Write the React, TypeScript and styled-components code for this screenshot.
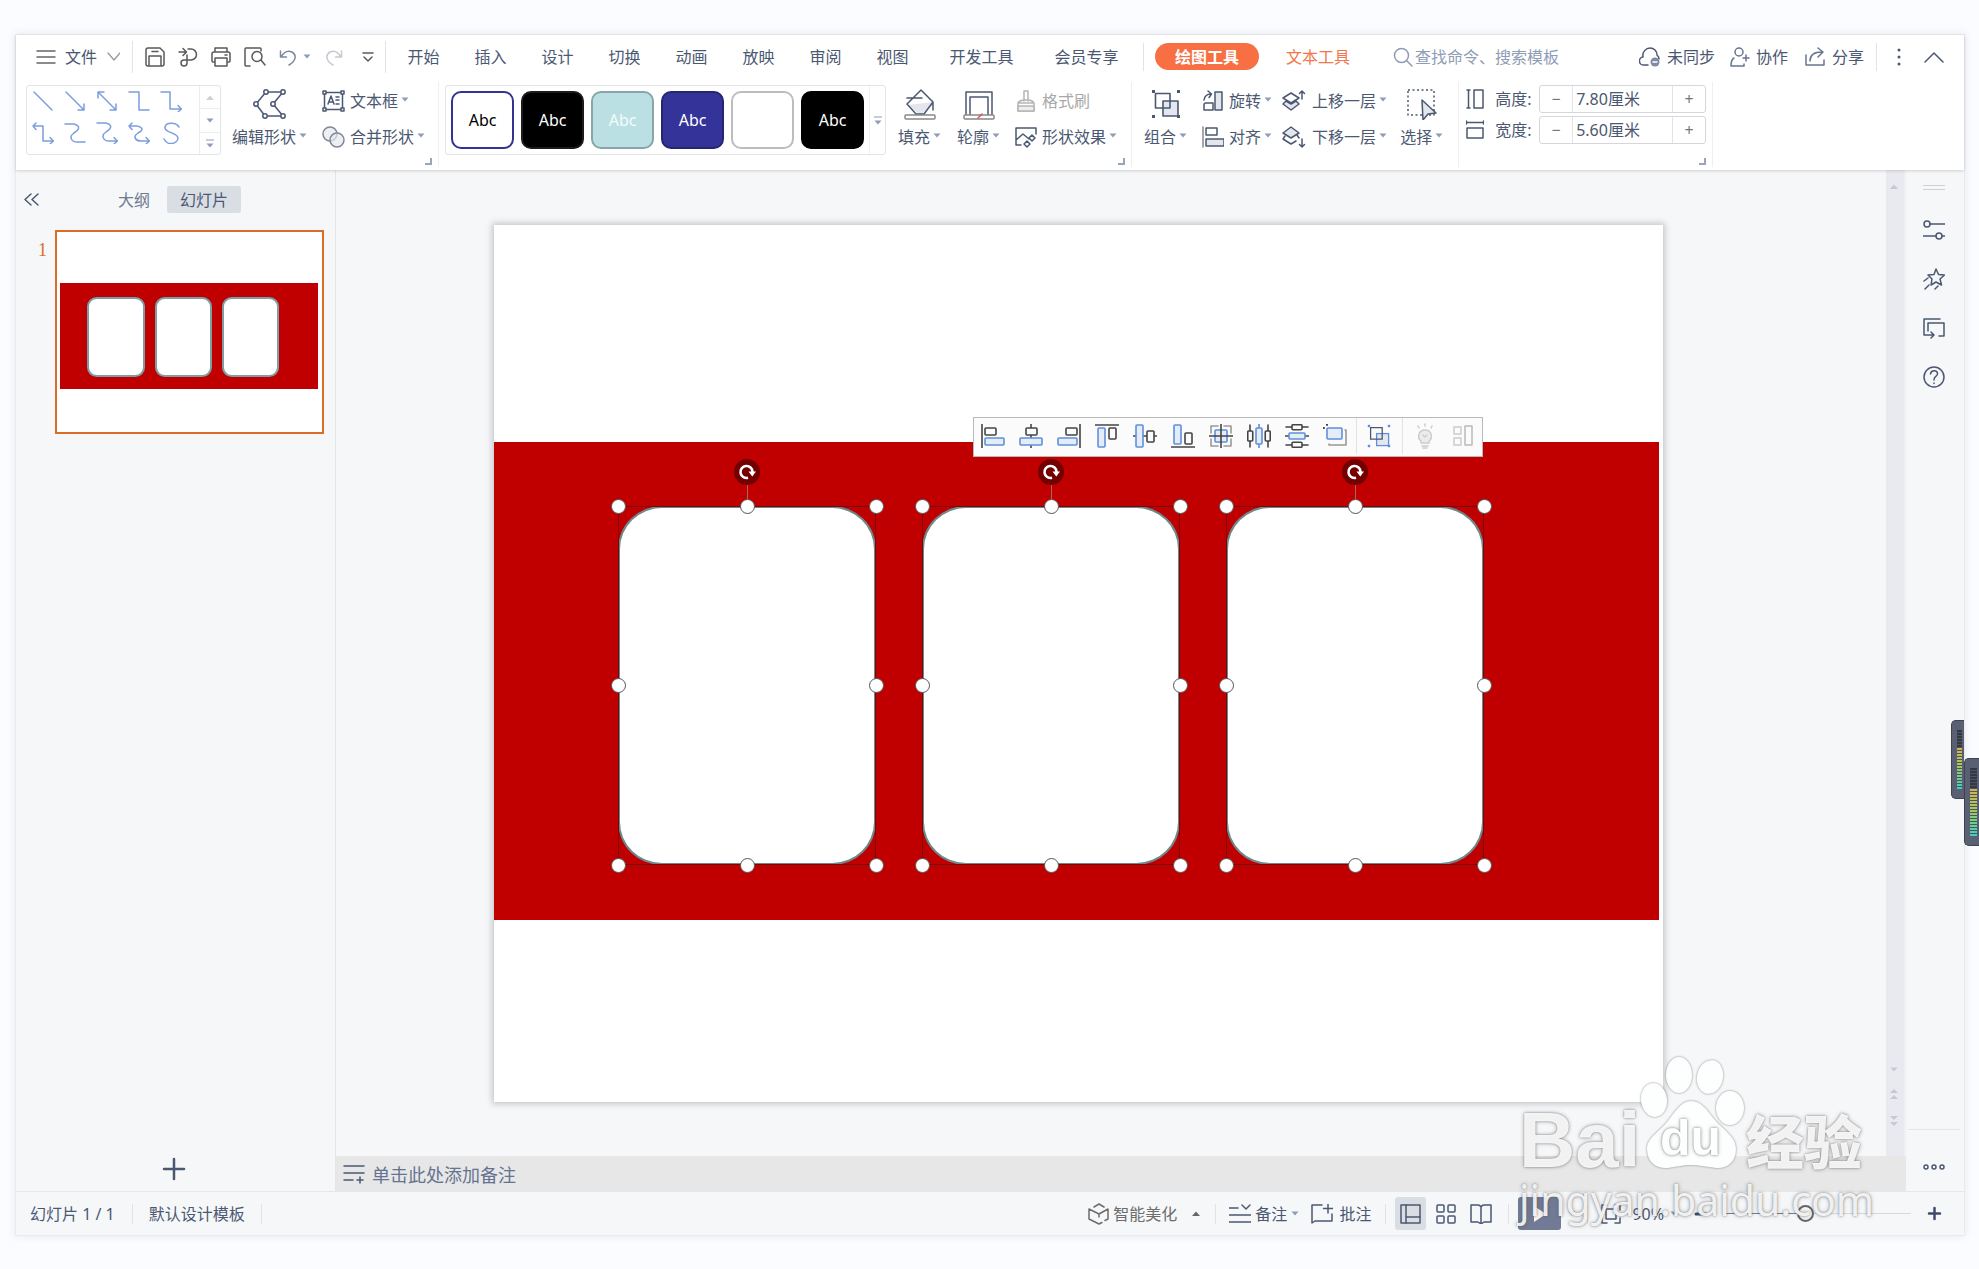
import React, { useState } from "react";
import styled, { createGlobalStyle, css } from "styled-components";

const ink = "#4b5872";
const muted = "#8f9cb5";
const rule = "#e6e7e9";
const red = "#c00000";

const GlobalStyle = createGlobalStyle`
  * { box-sizing: border-box; }
  html, body { margin: 0; padding: 0; }
  body {
    background: #fbfcff;
    color: ${ink};
    font: 400 16px/20px "Noto Sans", "Noto Sans CJK SC", sans-serif;
    overflow: hidden;
  }
  button, input { font: inherit; color: inherit; }
  button { background: none; border: 0; padding: 0; cursor: default; white-space: nowrap; }
  svg { display: block; flex: none; }
`;

/* ---------- frame ---------- */

const Page = styled.div`
  position: relative;
  display: flex;
  height: 100vh;
  padding: 35px 15px 34px 16px;
`;
const Window = styled.div`
  flex: 1;
  min-width: 0;
  display: flex;
  flex-direction: column;
  background: #f6f7f9;
  box-shadow: 0 0 0 1px #e9eaee, 0 0 8px 2px rgba(60, 60, 80, 0.08);
`;
const Ribbon = styled.header`
  position: relative;
  z-index: 1;
  background: #fff;
  box-shadow: 0 1px 3px rgba(0, 0, 0, 0.16);
`;
const Workspace = styled.main`
  flex: 1;
  min-height: 0;
  display: flex;
`;

/* ---------- shared parts ---------- */

const Rule = styled.span<{ $h?: number; $l?: number; $r?: number }>`
  flex: none;
  width: 1px;
  height: ${(p) => p.$h ?? 20}px;
  margin: 0 ${(p) => p.$r ?? 0}px 0 ${(p) => p.$l ?? 0}px;
  background: #e1e3e7;
`;
const Spacer = styled.span`flex: 1;`;

type IconProps = {
  w: number;
  h?: number;
  c?: string;
  s?: number;
  children: React.ReactNode;
};
const Icon = ({ w, h = w, c = ink, s = 1.5, children }: IconProps) => (
  <svg
    width={w}
    height={h}
    viewBox={`0 0 ${w} ${h}`}
    fill="none"
    stroke={c}
    strokeWidth={s}
    strokeLinecap="round"
    strokeLinejoin="round"
    aria-hidden="true"
  >
    {children}
  </svg>
);

const Caret = ({ up = false, c = muted }: { up?: boolean; c?: string }) => (
  <svg width="8" height="5" viewBox="0 0 8 5" aria-hidden="true">
    <path d={up ? "M0 5L4 0.5L8 5Z" : "M0.5 0.5H7.5L4 4.5Z"} fill={c} />
  </svg>
);

/* ---------- title bar ---------- */

const TitleBar = styled.div`
  display: flex;
  align-items: center;
  height: 43px;
  padding: 0 20px;
`;
const MenuButton = styled.button`
  display: flex;
  align-items: center;
  gap: 9px;
  margin-right: 12px;
`;
const QuickTools = styled.div`
  display: flex;
  align-items: center;
  gap: 13px;
  margin: 0 6px 0 12px;
`;
const IconButton = styled.button<{ $w?: number }>`
  display: flex;
  align-items: center;
  justify-content: center;
  gap: 6px;
  min-width: ${(p) => p.$w ?? 20}px;
`;
const Tabs = styled.nav`
  display: flex;
  margin: 0 4px;
`;
const Tab = styled.button<{ $wide?: boolean }>`
  width: ${(p) => (p.$wide ? 105 : 67)}px;
`;
const TabGroup = styled.div`
  display: flex;
  & + & { margin-left: 3px; }
`;
const ActiveTab = styled.button`
  width: 104px;
  height: 27px;
  margin: 0 27px 0 11px;
  border-radius: 14px;
  background: #f76f43;
  color: #fff;
  font-weight: 700;
`;
const AccentTab = styled.button`
  color: #f2764c;
`;
const Search = styled.label`
  display: flex;
  align-items: center;
  gap: 2px;
  margin-left: 43px;
`;
const SearchInput = styled.input`
  width: 160px;
  padding: 0;
  border: 0;
  outline: 0;
  background: none;
  &::placeholder { color: ${muted}; opacity: 1; }
`;
const LabelButton = styled.button<{ $r?: number; $gray?: boolean; $tight?: boolean }>`
  display: flex;
  align-items: center;
  gap: ${(p) => (p.$tight ? 4 : 6)}px;
  margin-right: ${(p) => p.$r ?? 0}px;
  ${(p) => p.$gray && css`color: #6d6d6d;`}
`;

/* ---------- command row ---------- */

const Commands = styled.div`
  display: flex;
  height: 92px;
  padding: 4px 0 3px 10px;
`;
const Group = styled.section<{ $l?: number; $r?: number }>`
  position: relative;
  display: flex;
  align-items: flex-start;
  padding: 3px ${(p) => p.$r ?? 6}px 0 ${(p) => p.$l ?? 0}px;
  border-right: 1px solid #eeeff1;
`;
const Launcher = styled.button`
  position: absolute;
  right: 6px;
  bottom: 2px;
  width: 7px;
  height: 7px;
  border: solid #9aa5ba;
  border-width: 0 2px 2px 0;
`;
const GalleryBox = styled.div`
  display: flex;
  height: 70px;
  border: 1px solid #e3e4e6;
  border-radius: 3px;
`;
const ShapeGrid = styled.div`
  display: grid;
  grid-template: 30px 34px / repeat(5, 32px);
  width: 172px;
`;
const ShapeCell = styled.button`
  display: grid;
  place-items: center;
`;
const Scroller = styled.div`
  display: grid;
  grid-template-rows: 22px 24px 1fr;
  width: 21px;
  border-left: 1px solid #ebecee;
`;
const ScrollCell = styled.button`
  display: flex;
  flex-direction: column;
  align-items: center;
  justify-content: center;
  gap: 2px;
  & + & { border-top: 1px solid #ebecee; }
`;
const StyleRow = styled.div`
  display: flex;
  gap: 7px;
  align-items: center;
  padding: 0 5px;
`;
const StyleChip = styled.button<{ $bg: string; $line: string; $fg: string }>`
  width: 63px;
  height: 58px;
  border: 2px solid ${(p) => p.$line};
  border-radius: 10px;
  background: ${(p) => p.$bg};
  color: ${(p) => p.$fg};
`;
const MoreStyles = styled.button`
  display: flex;
  flex-direction: column;
  align-items: center;
  justify-content: center;
  gap: 2px;
  width: 16px;
  border-left: 1px solid #eff0f2;
`;
const Big = styled.button<{ $l?: number }>`
  display: flex;
  flex-direction: column;
  align-items: center;
  gap: 7px;
  margin-left: ${(p) => p.$l ?? 16}px;
  padding-top: 3px;
`;
const Caption = styled.span`
  display: flex;
  align-items: center;
  gap: 3px;
  svg { margin-bottom: 4px; }
`;
const Stack = styled.div<{ $l?: number }>`
  display: flex;
  flex-direction: column;
  align-items: flex-start;
  gap: 12px;
  margin: 4px 0 0 ${(p) => p.$l ?? 15}px;
`;
const Small = styled.button<{ $off?: boolean }>`
  display: flex;
  align-items: center;
  gap: 5px;
  height: 24px;
  ${(p) => p.$off && css`color: #a9a9a9;`}
`;
const SizeRows = styled.div`
  display: flex;
  flex-direction: column;
  gap: 3px;
`;
const SizeRow = styled.div`
  display: flex;
  align-items: center;
  height: 28px;
  label { width: 44px; margin-left: 11px; }
`;
const Spin = styled.div`
  display: flex;
  width: 167px;
  height: 28px;
  border: 1px solid #d5d7dc;
  border-radius: 3px;
  button { width: 32px; color: #777; }
  input {
    flex: 1;
    min-width: 0;
    padding: 0 3px;
    border: solid #e1e3e7;
    border-width: 0 1px;
    outline: 0;
  }
`;

/* ---------- slide panel ---------- */

const Panel = styled.aside`
  flex: none;
  display: flex;
  flex-direction: column;
  width: 320px;
  padding: 16px 11px 10px 8px;
  border-right: 1px solid #e4e5e8;
`;
const PanelTabs = styled.div`
  display: flex;
  align-items: center;
  height: 27px;
`;
const PanelTab = styled.button<{ $on?: boolean }>`
  height: 27px;
  padding: 0 13px;
  border-radius: 3px;
  margin-left: 4px;
  ${(p) => (p.$on ? css`background: #d9dde4;` : css`color: #6f7a92;`)}
`;
const Collapse = styled.button`
  margin-right: 62px;
`;
const ThumbRow = styled.div`
  display: flex;
  margin-top: 17px;
`;
const ThumbNumber = styled.span`
  width: 31px;
  padding: 10px 8px 0 0;
  text-align: right;
  color: #dc6b28;
  font: 18px/20px "Liberation Serif", serif;
`;
const Thumb = styled.button`
  flex: 1;
  padding: 3px;
  border: 2px solid #dc6b28;
  background: #fff;
`;
const AddSlide = styled.button`
  align-self: center;
  margin-top: auto;
`;

/* ---------- canvas ---------- */

const Stage = styled.div`
  flex: 1;
  min-width: 0;
  display: flex;
  flex-direction: column;
`;
const CanvasRow = styled.div`
  flex: 1;
  min-height: 0;
  display: flex;
`;
const Canvas = styled.div`
  flex: 1;
  min-width: 0;
  padding: 55px 223px 0 158px;
`;
const SlidePaper = styled.div<{ $shadow?: boolean }>`
  position: relative;
  aspect-ratio: 4 / 3;
  width: 100%;
  background: #fff;
  ${(p) => p.$shadow && css`box-shadow: 0 0 6px 2px rgba(70, 75, 80, 0.28);`}
`;
const Item = styled.div`
  position: absolute;
`;
const Band = styled(Item)`
  background: ${red};
`;
const Card = styled.div<{ $thin?: boolean }>`
  width: 100%;
  height: 100%;
  border: 2px solid ${(p) => (p.$thin ? "#7d9ea2" : "#6d898c")};
  border-radius: 17% / 12%;
  background: #fff;
`;
const Selection = styled(Item)`
  outline: 1px solid #760a0a;
  outline-offset: -1px;
`;
const Handle = styled.span`
  position: absolute;
  width: 15px;
  height: 15px;
  margin: -7px 0 0 -7px;
  border: 1px solid #555;
  border-radius: 50%;
  background: #fff;
`;
const Stem = styled.span`
  position: absolute;
  left: 50%;
  bottom: 100%;
  width: 1px;
  height: 24px;
  background: #b06060;
`;
const Rotate = styled.span`
  position: absolute;
  left: 50%;
  bottom: 100%;
  display: grid;
  place-items: center;
  width: 26px;
  height: 26px;
  margin: 0 0 21px -13px;
  border-radius: 50%;
  background: #720000;
`;
const FloatBar = styled.div`
  position: absolute;
  left: 41%;
  top: 192px;
  display: flex;
  align-items: flex-start;
  height: 40px;
  border: 1px solid #b9b9b9;
  background: #fbfbfb;
`;
const FloatButton = styled.button`
  display: grid;
  place-items: center;
  width: 38px;
  height: 36px;
`;
const ScrollTrack = styled.div`
  display: flex;
  flex-direction: column;
  align-items: center;
  gap: 17px;
  width: 20px;
  padding: 14px 2px 30px 0;
  background: #e8eaf0;
  border-right: 2px solid #eef0f4;
`;
const NotesBar = styled.label`
  display: flex;
  align-items: center;
  gap: 7px;
  height: 35px;
  padding-left: 7px;
  background: #e7e7e7;
`;
const NotesInput = styled.input`
  flex: 1;
  padding: 2px 0 0;
  border: 0;
  outline: 0;
  background: none;
  font-size: 18px;
  line-height: 24px;
  &::placeholder { color: #667390; opacity: 1; }
`;
const SideBar = styled.aside`
  flex: none;
  display: flex;
  flex-direction: column;
  align-items: center;
  gap: 27px;
  width: 58px;
  padding: 14px 2px 0 0;
`;
const SideFoot = styled.div`
  display: grid;
  place-items: center;
  width: 52px;
  height: 62px;
  padding-top: 12px;
  margin-top: auto;
  border-top: 1px solid #e2e4e8;
`;

/* ---------- status bar ---------- */

const StatusBar = styled.footer`
  display: flex;
  align-items: center;
  height: 44px;
  padding: 0 22px 0 14px;
  border-top: 1px solid ${rule};
`;
const ViewButton = styled.button<{ $on?: boolean }>`
  display: grid;
  place-items: center;
  width: 31px;
  height: 33px;
  margin-right: 4px;
  border-radius: 3px;
  ${(p) => p.$on && css`background: #d9dde4;`}
`;
const PlayButton = styled.button`
  display: grid;
  place-items: center;
  width: 43px;
  height: 33px;
  margin-right: 7px;
  border-radius: 3px;
  background: #717b95;
`;
const Zoom = styled.input`
  appearance: none;
  width: 187px;
  height: 18px;
  margin: 0 16px;
  background: linear-gradient(90deg, #717b95 44%, #d5d8df 44%) center / 100% 1px no-repeat;
  &::-webkit-slider-thumb {
    appearance: none;
    width: 17px;
    height: 17px;
    border: 2px solid #666;
    border-radius: 50%;
    background: #f6f7f9;
  }
`;

/* ---------- overlays ---------- */

const Meter = styled.div<{ $outer?: boolean }>`
  position: absolute;
  z-index: 2;
  right: ${(p) => (p.$outer ? 0 : 15)}px;
  top: ${(p) => (p.$outer ? 758 : 720)}px;
  width: ${(p) => (p.$outer ? 15 : 13)}px;
  height: ${(p) => (p.$outer ? 88 : 79)}px;
  padding: 9px 2px 9px 5px;
  border: solid #3f434c;
  border-width: 1px 0 1px 1px;
  border-radius: 5px 0 0 5px;
  background: #596073;
`;
const Levels = styled.div`
  height: 100%;
  background:
    repeating-linear-gradient(180deg, transparent 0 2px, #4c5362 2px 3px),
    linear-gradient(180deg, #343842 0 30%, #d9b24f 30%, #a7c85a 60%, #3fd0b8 100%);
`;
const Watermark = styled.div`
  position: absolute;
  z-index: 3;
  right: 107px;
  bottom: 39px;
  width: 353px;
  color: rgba(255, 255, 255, 0.9);
  text-shadow: 0 0 2px rgba(80, 80, 80, 0.6), 0 0 4px rgba(90, 90, 90, 0.45);
  white-space: nowrap;
  pointer-events: none;
`;
const MarkTop = styled.div`
  display: flex;
  align-items: flex-end;
  height: 113px;
`;
const MarkBai = styled.span`
  width: 121px;
  height: 72px;
  font: 700 78px/84px "Liberation Sans", sans-serif;
`;
const MarkPaw = styled.span`
  position: relative;
  width: 106px;
  filter: drop-shadow(0 0 1px rgba(90, 90, 90, 0.7));
`;
const MarkDu = styled.span`
  position: absolute;
  left: 20px;
  top: 54px;
  color: #fdfefe;
  font: 700 50px/56px "Liberation Sans", sans-serif;
`;
const MarkCn = styled.span`
  font: 900 58px/62px "Noto Sans CJK SC", sans-serif;
`;
const MarkUrl = styled.div`
  font: 400 41px/60px "Noto Sans", sans-serif;
`;

/* ---------- data ---------- */

const lineShapes: [string, React.ReactNode][] = [
  ["直线", <path d="M2 2L20 20" />],
  ["箭头", <path d="M2 2L20 20M20 14V20H14" />],
  ["双箭头", <path d="M2 2L20 20M20 14V20H14M2 8V2H8" />],
  ["肘形连接符", <path d="M1 2H11V20H21" />],
  ["肘形箭头", <path d="M1 2H10V19H21M18 15.500L21.500 19L18 22" />],
  ["肘形双箭头", <path d="M1 4H11V19H21M18 15.500L21.500 19L18 22M4 1L1 4L4 7.500" />],
  ["曲线连接符", <path d="M1 2H10C18 4 14 9 10 11C4 15 8 20 13 20H21" />],
  ["曲线箭头", <path d="M1 1H10C18 3 14 8 10 10C4 14 8 19 13 19H21M18 15.500L21.500 19L18 22" />],
  ["曲线双箭头", <path d="M1 4H9C17 6 14 9 10 11C4 15 8 19 13 19H21M18 15.500L21.500 19L18 22M4 1L1 4L4 7.500" />],
  ["自由曲线", <path d="M19 5C16 0 6 0 5 5C4 11 17 10 18 16C18 21 8 25 4 17" />],
];

const chips = [
  { bg: "#fff", line: "#333390", fg: "#000", text: "Abc" },
  { bg: "#000", line: "#1b1b1b", fg: "#fff", text: "Abc" },
  { bg: "#bbe0e3", line: "#8aa5a7", fg: "#f4fbfb", text: "Abc" },
  { bg: "#333399", line: "#262670", fg: "#fff", text: "Abc" },
  { bg: "#fff", line: "#bdbdbd", fg: "#fff", text: "" },
  { bg: "#000", line: "#000", fg: "#fff", text: "Abc" },
];

const shortTabs = ["开始", "插入", "设计", "切换", "动画", "放映", "审阅", "视图"];

/* Slide units: the paper is 1169 by 877. */
const paper = { w: 1169, h: 877 };
const band = { x: 0, y: 217, w: 1165, h: 478 };
const cards = [124, 428, 732].map((x) => ({ x, y: 281, w: 258, h: 359 }));
const place = (b: { x: number; y: number; w: number; h: number }) => ({
  left: `${(b.x / paper.w) * 100}%`,
  top: `${(b.y / paper.h) * 100}%`,
  width: `${(b.w / paper.w) * 100}%`,
  height: `${(b.h / paper.h) * 100}%`,
});
const handleSpots = [
  [0, 0], [50, 0], [100, 0], [0, 50], [100, 50], [0, 100], [50, 100], [100, 100],
];

const K = "#444";
const B = "#5f8fdc";
const F = "#e4ecf8";
const alignTools: [string, React.ReactNode][] = [
  ["左对齐", <><path d="M1 0V24" stroke={K} /><rect x="4" y="4" width="11" height="7" rx="1" stroke={K} /><rect x="4" y="14" width="19" height="7" rx="1" fill={F} /></>],
  ["水平居中", <><path d="M12 0V24" stroke={K} /><rect x="7" y="4" width="11" height="7" rx="1" stroke={K} fill="#fbfbfb" /><rect x="1" y="14" width="22" height="7" rx="1" fill={F} /></>],
  ["右对齐", <><path d="M23 0V24" stroke={K} /><rect x="9" y="4" width="11" height="7" rx="1" stroke={K} /><rect x="1" y="14" width="19" height="7" rx="1" fill={F} /></>],
  ["靠上对齐", <><path d="M0 1H24" stroke={K} /><rect x="3" y="4" width="7" height="19" rx="1" fill={F} /><rect x="14" y="4" width="7" height="11" rx="1" stroke={K} /></>],
  ["垂直居中", <><path d="M0 12H24" stroke={K} /><rect x="3" y="1" width="7" height="22" rx="1" fill={F} /><rect x="14" y="7" width="7" height="11" rx="1" stroke={K} fill="#fbfbfb" /></>],
  ["靠下对齐", <><path d="M0 23H24" stroke={K} /><rect x="3" y="1" width="7" height="19" rx="1" fill={F} /><rect x="14" y="9" width="7" height="11" rx="1" stroke={K} /></>],
  ["中心对齐", <><path d="M9 2H2V9M15 2H22V9M9 22H2V15M15 22H22V15" stroke="#999" /><rect x="6" y="6" width="12" height="12" rx="1" fill={F} /><path d="M12 0V24M0 12H24" stroke={K} /></>],
  ["横向分布", <><path d="M3 1V23M21 1V23" stroke={K} /><path d="M12 0V24" /><rect x="0.750" y="7" width="5" height="10" rx="1" stroke={K} fill="#fbfbfb" /><rect x="9" y="4" width="6" height="16" rx="1" fill={F} /><rect x="18.250" y="7" width="5" height="10" rx="1" stroke={K} fill="#fbfbfb" /></>],
  ["纵向分布", <><path d="M1 3H23M1 21H23" stroke={K} /><path d="M0 12H24" stroke={K} /><rect x="7" y="0.750" width="10" height="5" rx="1" stroke={K} fill="#fbfbfb" /><rect x="4" y="9" width="16" height="6" rx="1" fill={F} /><rect x="7" y="18.250" width="10" height="5" rx="1" stroke={K} fill="#fbfbfb" /></>],
  ["等尺寸", <><path d="M0 4H1M4 0V1" stroke={K} strokeWidth={2} /><rect x="4" y="4" width="15" height="11" rx="1" fill={F} /><path d="M22 6H23V21H6V20" stroke="#999" /></>],
];

const GroupGlyph = ({ c = ink, dot = ink, inner = ink, size = 30 }) => (
  <svg width={size} height={size} viewBox="0 0 30 30" fill="none" strokeWidth="1.600" aria-hidden="true">
    <rect x="12" y="12" width="15" height="15" fill="#e3e7ef" stroke={inner} />
    <path d="M6 4.500H19V19H4.500V4.500H6" stroke={c} />
    <g fill={dot}>
      <rect x="1" y="1" width="3" height="3" /><rect x="26" y="1" width="3" height="3" />
      <rect x="1" y="26" width="3" height="3" /><rect x="26" y="26" width="3" height="3" />
    </g>
  </svg>
);

const SlideArt = ({ thin }: { thin?: boolean }) => (
  <>
    <Band style={place(band)} />
    {cards.map((c) => (
      <Item key={c.x} style={place(c)}><Card $thin={thin} /></Item>
    ))}
  </>
);

/* ---------- sections ---------- */

const Title = () => (
  <TitleBar>
    <MenuButton>
      <Icon w={20} h={16} c="#666"><path d="M1 2H19M1 8H19M1 14H19" /></Icon>
      文件
      <Icon w={14} h={10} c="#999" s={1.3}><path d="M2 1L8 8L14 1" /></Icon>
    </MenuButton>
    <Rule $h={32} />
    <QuickTools>
      <IconButton aria-label="保存">
        <Icon w={20} c="#5a5a5a"><path d="M3 1H15L19 5V17Q19 19 17 19H3Q1 19 1 17V3Q1 1 3 1ZM4 19V9H16V19M7 4.500H13" /></Icon>
      </IconButton>
      <IconButton aria-label="输出为PDF">
        <Icon w={20} c="#5a5a5a"><path d="M1 5H8M5 1.500L8.500 5L5 8.500M10 2H13A5.500 5.500 0 0 1 13 13H6A3 3 0 1 0 9 16V8" /></Icon>
      </IconButton>
      <IconButton aria-label="打印">
        <Icon w={20} c="#5a5a5a"><path d="M4 5V1H16V5M4 15H2Q1 15 1 14V7Q1 5 3 5H17Q19 5 19 7V14Q19 15 18 15H16M4 11H16V19H4ZM14 8H16" /></Icon>
      </IconButton>
      <IconButton aria-label="打印预览">
        <Icon w={22} h={20} c="#5a5a5a"><path d="M6 19H2Q1 19 1 18V2Q1 1 2 1H16Q17 1 17 2V4" /><circle cx="13" cy="9.500" r="5" /><path d="M17 13L21 18" /></Icon>
      </IconButton>
      <IconButton aria-label="撤销" $w={32}>
        <Icon w={18} h={18} c="#7d889f"><path d="M1.500 3V9H7.500M2 9C5 4 9 2 13 4C18 7 17 13 10 17" /></Icon>
        <Caret />
      </IconButton>
      <IconButton aria-label="恢复">
        <Icon w={18} h={18} c="#c6c9cf"><path d="M16.500 3V9H10.500M16 9C13 4 9 2 5 4C0 7 1 13 8 17" /></Icon>
      </IconButton>
      <IconButton aria-label="自定义快速访问工具栏" $w={22}>
        <Icon w={12} h={12} c="#5a5a5a"><path d="M1 2H11M2 6L6 10L10 6" /></Icon>
      </IconButton>
    </QuickTools>
    <Rule $h={32} />
    <Tabs>
      <TabGroup>
        {shortTabs.map((t) => <Tab key={t}>{t}</Tab>)}
      </TabGroup>
      <TabGroup>
        <Tab $wide>开发工具</Tab>
        <Tab $wide>会员专享</Tab>
      </TabGroup>
    </Tabs>
    <Rule $h={28} />
    <ActiveTab>绘图工具</ActiveTab>
    <AccentTab>文本工具</AccentTab>
    <Search>
      <Icon w={20} c={muted}><circle cx="8.500" cy="8.500" r="7" /><path d="M13.500 13.500L19 19" /></Icon>
      <SearchInput placeholder="查找命令、搜索模板" aria-label="查找命令、搜索模板" />
    </Search>
    <Spacer />
    <LabelButton $r={15}>
      <Icon w={22} h={20}>
        <path d="M9 18H5A4 4 0 0 1 4 10C3 5 7 1 11 1C15 1 18 4 18 8Q20 10 20 12" />
        <circle cx="16" cy="15" r="4.500" fill="#7f8aa5" stroke="none" />
        <path d="M14 15H18" stroke="#fff" />
      </Icon>
      未同步
    </LabelButton>
    <LabelButton $r={17}>
      <Icon w={20} c="#69758e"><circle cx="9" cy="5" r="4" /><path d="M4 11C2 12 1 14 1 19H14V17M16 8V14M13 11H19" /></Icon>
      协作
    </LabelButton>
    <LabelButton $r={12}>
      <Icon w={21} h={19} c="#69758e"><path d="M1 8V18H19V13M5 14C5 8 9 5 17 5M13 1L18 5L13 10" /></Icon>
      分享
    </LabelButton>
    <Rule $h={28} $r={18} />
    <IconButton aria-label="更多" $w={8}>
      <svg width="4" height="18" viewBox="0 0 4 18" fill={ink} aria-hidden="true">
        <circle cx="2" cy="2" r="1.500" /><circle cx="2" cy="9" r="1.500" /><circle cx="2" cy="16" r="1.500" />
      </svg>
    </IconButton>
    <Rule $l={10} $r={10} $h={0} />
    <IconButton aria-label="收起功能区">
      <Icon w={20} h={12}><path d="M1 11L10 2L19 11" /></Icon>
    </IconButton>
  </TitleBar>
);

const CommandRow = () => {
  const [height, setHeight] = useState("7.80厘米");
  const [width, setWidth] = useState("5.60厘米");
  return (
    <Commands>
      <Group $r={13}>
        <GalleryBox>
          <ShapeGrid>
            {lineShapes.map(([name, d]) => (
              <ShapeCell key={name} aria-label={name}><Icon w={22} h={22} c="#7c9ddf">{d}</Icon></ShapeCell>
            ))}
          </ShapeGrid>
          <Scroller>
            <ScrollCell aria-label="上一行"><Caret up c="#ccd2dc" /></ScrollCell>
            <ScrollCell aria-label="下一行"><Caret /></ScrollCell>
            <ScrollCell aria-label="更多形状"><Icon w={8} h={2} c={muted} s={1}><path d="M0 1H8" /></Icon><Caret /></ScrollCell>
          </Scroller>
        </GalleryBox>
        <Big $l={11}>
          <Icon w={34} h={32}>
            <path d="M13 4H30L20 16L30 28H12L3 16Z" />
            <g fill="#fff"><circle cx="13" cy="4" r="2.200" /><circle cx="30" cy="4" r="2.200" /><circle cx="20" cy="16" r="2.200" /><circle cx="30" cy="28" r="2.200" /><circle cx="12" cy="28" r="2.200" /><circle cx="3" cy="16" r="2.200" /></g>
          </Icon>
          <Caption>编辑形状<Caret /></Caption>
        </Big>
        <Stack>
          <Small>
            <Icon w={23} h={22}>
              <rect x="2.500" y="2.500" width="18" height="17" />
              <g fill="#fff"><rect x="1" y="1" width="3" height="3" /><rect x="19" y="1" width="3" height="3" /><rect x="1" y="18" width="3" height="3" /><rect x="19" y="18" width="3" height="3" /></g>
              <path d="M6 14L9 6L12 14M7 12H11M14 7H17M14 10H17M14 14H17" />
            </Icon>
            <Caption>文本框<Caret /></Caption>
          </Small>
          <Small>
            <Icon w={23} h={22} c="#7f8898"><circle cx="8" cy="8" r="7" fill="#edeff3" /><circle cx="15" cy="14" r="7" fill="#e6e9ee" fillOpacity="0.700" /></Icon>
            <Caption>合并形状<Caret /></Caption>
          </Small>
        </Stack>
        <Launcher aria-label="形状设置" />
      </Group>

      <Group $l={6} $r={14}>
        <GalleryBox>
          <StyleRow>
            {chips.map((c, i) => (
              <StyleChip key={i} $bg={c.bg} $line={c.line} $fg={c.fg} aria-label={`样式${i + 1}`}>{c.text}</StyleChip>
            ))}
          </StyleRow>
          <MoreStyles aria-label="更多样式">
            <Icon w={8} h={2} c={muted} s={1}><path d="M0 1H8" /></Icon><Caret />
          </MoreStyles>
        </GalleryBox>
        <Big $l={12}>
          <Icon w={32} h={32}>
            <path d="M4 17L16 27L29 17V14Z" fill="#e3e6ec" stroke="none" />
            <path d="M17 2L3 16L12 26H20L29 14ZM3 10H18M29 14V22" />
            <rect x="1" y="27" width="30" height="4" rx="1" stroke="#888" fill="#fff" />
          </Icon>
          <Caption>填充<Caret /></Caption>
        </Big>
        <Big>
          <Icon w={32} h={32}>
            <path d="M3 27V4H29V27M7 27V9H25V27" />
            <rect x="1" y="27" width="30" height="4" rx="1" stroke="#888" fill="#fff" />
            <path d="M15 30L19 26" stroke="#e05050" />
          </Icon>
          <Caption>轮廓<Caret /></Caption>
        </Big>
        <Stack>
          <Small $off>
            <Icon w={22} h={22} c="#b5b5b5"><path d="M9 11V1H13V11M3 13H19V21H3ZM3 13Q5 10 9 10H13Q17 10 19 13" /><path d="M3 16H19V21H3Z" fill="#eee" /></Icon>
            格式刷
          </Small>
          <Small>
            <Icon w={22} h={22}>
              <path d="M6 19H1V2H21V8M1 14L8 8L14 13" />
              <path d="M17 9L20 12L17 15L14 12ZM12 15L15 18L12 21L9 18Z" fill="#fff" />
            </Icon>
            <Caption>形状效果<Caret /></Caption>
          </Small>
        </Stack>
        <Launcher aria-label="形状样式设置" />
      </Group>

      <Group $l={12} $r={15}>
        <Big $l={0}>
          <Icon w={30} h={32} c="none"><g transform="translate(0 1)"><GroupGlyph /></g></Icon>
          <Caption>组合<Caret /></Caption>
        </Big>
        <Stack>
          <Small>
            <Icon w={22} h={22}><rect x="13" y="2" width="7" height="18" fill="#e3e6ec" /><path d="M2 20H11V13H4Q2 13 2 15ZM2 10Q3 4 9 4M6 1L9.500 4L7 7.500" /></Icon>
            <Caption>旋转<Caret /></Caption>
          </Small>
          <Small>
            <Icon w={22} h={22}><path d="M1 1V21" stroke="#888" /><rect x="4" y="2" width="11" height="7" /><rect x="4" y="13" width="18" height="7" fill="#e3e6ec" /></Icon>
            <Caption>对齐<Caret /></Caption>
          </Small>
        </Stack>
        <Stack $l={10}>
          <Small>
            <Icon w={25} h={22}><path d="M9 3L17 8L9 13L1 8Z" /><path d="M4 11L1 14L9 20L17 14L14 11L9 14Z" fill="#e3e6ec" /><path d="M20 9V1M17.500 3.500L20 1L22.500 3.500" /></Icon>
            <Caption>上移一层<Caret /></Caption>
          </Small>
          <Small>
            <Icon w={25} h={22}><path d="M9 1L17 7L9 12L1 7Z" fill="#e3e6ec" /><path d="M3 10L1 13L9 18L14 15M15 9L17 12M20 13V21M17.500 18.500L20 21L22.500 18.500" /></Icon>
            <Caption>下移一层<Caret /></Caption>
          </Small>
        </Stack>
        <Big $l={13}>
          <Icon w={32} h={32}>
            <path d="M2 2H28V27H2Z" strokeDasharray="2 2.500" strokeLinecap="butt" />
            <path d="M16 12L30 25L22 26L17 32Z" fill="#e3e6ec" />
          </Icon>
          <Caption>选择<Caret /></Caption>
        </Big>
      </Group>

      <Group $l={7}>
        <SizeRows>
          <SizeRow>
            <Icon w={18} h={20}><path d="M1 1H4M1 19H4M2.500 1V19" /><rect x="8" y="1" width="9" height="18" /></Icon>
            <label htmlFor="shape-h">高度:</label>
            <Spin>
              <button aria-label="减小高度">−</button>
              <input id="shape-h" value={height} onChange={(e) => setHeight(e.target.value)} />
              <button aria-label="增大高度">+</button>
            </Spin>
          </SizeRow>
          <SizeRow>
            <Icon w={18} h={20}><path d="M0.500 1V4M17.500 1V4M0.500 2.500H17.500" /><rect x="1" y="8" width="16" height="10" /></Icon>
            <label htmlFor="shape-w">宽度:</label>
            <Spin>
              <button aria-label="减小宽度">−</button>
              <input id="shape-w" value={width} onChange={(e) => setWidth(e.target.value)} />
              <button aria-label="增大宽度">+</button>
            </Spin>
          </SizeRow>
        </SizeRows>
        <Launcher aria-label="大小设置" />
      </Group>
    </Commands>
  );
};

const SlidePanel = () => (
  <Panel>
    <PanelTabs>
      <Collapse aria-label="收起面板"><Icon w={15} h={13}><path d="M7 1L1 6.500L7 12M14 1L8 6.500L14 12" /></Icon></Collapse>
      <PanelTab>大纲</PanelTab>
      <PanelTab $on>幻灯片</PanelTab>
    </PanelTabs>
    <ThumbRow>
      <ThumbNumber>1</ThumbNumber>
      <Thumb aria-label="幻灯片 1"><SlidePaper><SlideArt thin /></SlidePaper></Thumb>
    </ThumbRow>
    <AddSlide aria-label="新建幻灯片"><Icon w={24} s={2.500}><path d="M12 2V22M2 12H22" /></Icon></AddSlide>
  </Panel>
);

const SlideCanvas = () => (
  <Canvas>
    <SlidePaper $shadow>
      <SlideArt />
      {cards.map((c) => (
        <Selection key={c.x} style={place(c)}>
          <Stem />
          <Rotate>
            <svg width="18" height="18" viewBox="0 0 18 18" fill="none" aria-hidden="true">
              <path d="M10 14.800A6 6 0 1 1 14.500 9" stroke="#fff" strokeWidth="2.600" />
              <path d="M10.500 8.500H18L14.300 13.500Z" fill="#fff" />
            </svg>
          </Rotate>
          {handleSpots.map(([x, y]) => (
            <Handle key={`${x}-${y}`} style={{ left: `${x}%`, top: `${y}%` }} />
          ))}
        </Selection>
      ))}
      <FloatBar role="toolbar" aria-label="对齐工具">
        {alignTools.map(([name, d]) => (
          <FloatButton key={name} aria-label={name}><Icon w={24} h={24} c={B} s={1.600}>{d}</Icon></FloatButton>
        ))}
        <Rule $h={36} $l={2} $r={3} />
        <FloatButton aria-label="组合"><GroupGlyph size={24} dot={B} inner={B} /></FloatButton>
        <Rule $h={36} $l={4} $r={3} />
        <FloatButton aria-label="智能图形">
          <Icon w={20} h={26} c="#ccc"><path d="M6 18C2 15 3 7 10 7C17 7 18 15 14 18V20H6ZM7 23H13M8 25H12M10 1V3M3 3L4 5M17 3L16 5M8 12L10 14L12 12" fill="#ececec" /></Icon>
        </FloatButton>
        <FloatButton aria-label="布局">
          <Icon w={20} h={22} c="#ccc"><rect x="1" y="2" width="7" height="7" /><rect x="1" y="13" width="7" height="7" /><rect x="12" y="1" width="7" height="19" stroke="#bbb" /></Icon>
        </FloatButton>
      </FloatBar>
    </SlidePaper>
  </Canvas>
);

const Twin = ({ up }: { up?: boolean }) => (
  <svg width="8" height="10" viewBox="0 0 8 10" fill="#c6c9d1" aria-hidden="true">
    {up ? <path d="M0 4L4 0L8 4ZM0 10L4 6L8 10Z" /> : <path d="M0 0H8L4 4ZM0 6H8L4 10Z" />}
  </svg>
);

const Tools = () => (
  <SideBar>
    <Icon w={22} h={8} c="#cfd1d5" s={1}><path d="M0 1.500H22M0 5.500H22" /></Icon>
    <IconButton aria-label="属性">
      <Icon w={22} h={22}><path d="M7 5H22M0 17H13M19 17H22" /><circle cx="4" cy="5" r="3" /><circle cx="16" cy="17" r="3" /></Icon>
    </IconButton>
    <IconButton aria-label="动画">
      <Icon w={22} h={22}><path d="M13 1L15.500 6.500L21.500 7L17 11L18.500 17L13 14L8 17L9 11L5 7L11 6.500ZM5 10L1 13M6 17L2 21M15 18L12 21" /></Icon>
    </IconButton>
    <IconButton aria-label="切换">
      <Icon w={22} h={22}><path d="M17 2H1V18H11M8 15L11 18L8 21M5 14V6H21V19H16" /></Icon>
    </IconButton>
    <IconButton aria-label="帮助">
      <Icon w={22} h={22}><circle cx="11" cy="11" r="10" /><path d="M7.500 8C8 3.500 15 4 14.500 8C14 11 11 10 11 14M11 17V17.500" /></Icon>
    </IconButton>
    <SideFoot>
      <IconButton aria-label="更多工具">
        <Icon w={22} h={6}><circle cx="3" cy="3" r="2" /><circle cx="11" cy="3" r="2" /><circle cx="19" cy="3" r="2" /></Icon>
      </IconButton>
    </SideFoot>
  </SideBar>
);

const Status = () => (
  <StatusBar>
    <span>幻灯片 1 / 1</span>
    <Rule $l={17} $r={16} />
    <span>默认设计模板</span>
    <Rule $l={16} />
    <Spacer />
    <LabelButton $gray $tight>
      <Icon w={21} h={22} c="#6d6d6d"><path d="M6 4L11 1L16 4M1 6V16L11 21L14 19.500M1 6L11 11L20 6V16L17 17.500M11 11V14" /></Icon>
      智能美化
      <Rule $h={0} $l={6} />
      <Caret up c="#666" />
    </LabelButton>
    <Rule $l={15} $r={13} />
    <LabelButton $r={12} $tight>
      <Icon w={22} h={20}><path d="M0 4H9M0 11H22M0 18H22M13 1L17 5L21 1" /></Icon>
      备注<Caret />
    </LabelButton>
    <LabelButton>
      <Icon w={22} h={20}><path d="M11 1H1V19L4 17H21V10M17 0V9M12.500 4.500H22" /></Icon>
      批注
    </LabelButton>
    <Rule $l={14} $r={9} />
    <ViewButton $on aria-label="普通视图">
      <Icon w={21} h={20}><rect x="1" y="1" width="19" height="18" /><path d="M6 1V19M6 13H20" /></Icon>
    </ViewButton>
    <ViewButton aria-label="幻灯片浏览">
      <Icon w={20} h={20}><rect x="1" y="1" width="7" height="7" rx="1" /><rect x="12" y="1" width="7" height="7" rx="1" /><rect x="1" y="12" width="7" height="7" rx="1" /><rect x="12" y="12" width="7" height="7" rx="1" /></Icon>
    </ViewButton>
    <ViewButton aria-label="阅读视图">
      <Icon w={22} h={20}><path d="M11 3Q10 1 8 1H1V18H8L11 20L14 18H21V1H14Q12 1 11 3V19" /></Icon>
    </ViewButton>
    <Rule $l={8} $r={9} />
    <PlayButton aria-label="放映"><svg width="14" height="18" viewBox="0 0 14 18" aria-hidden="true"><path d="M1 1L13 9L1 17Z" fill="#fff5f0" /></svg></PlayButton>
    <Caret />
    <Rule $l={11} $r={13} />
    <IconButton aria-label="适应窗口">
      <Icon w={20} h={20}><path d="M1 6V1H6M14 1H19V6M19 14V19H14M6 19H1V14" /><rect x="5" y="5" width="10" height="10" /></Icon>
    </IconButton>
    <Rule $h={0} $r={10} />
    <LabelButton $r={16}>90%<Caret /></LabelButton>
    <IconButton aria-label="缩小" $w={14}><Icon w={14} s={3} c="#3f4a6b"><path d="M2 7H12" /></Icon></IconButton>
    <Zoom type="range" min={0} max={100} defaultValue={43} aria-label="缩放" />
    <IconButton aria-label="放大" $w={15}><Icon w={15} s={2.500} c="#3f4a6b"><path d="M7.500 2V13M2 7.500H13" /></Icon></IconButton>
  </StatusBar>
);

export default function App() {
  return (
    <>
      <GlobalStyle />
      <Page>
        <Window>
          <Ribbon>
            <Title />
            <CommandRow />
          </Ribbon>
          <Workspace>
            <SlidePanel />
            <Stage>
              <CanvasRow>
                <SlideCanvas />
                <ScrollTrack>
                  <Caret up c="#c6c9d1" />
                  <Spacer />
                  <Caret c="#c6c9d1" />
                  <Twin up />
                  <Twin />
                </ScrollTrack>
              </CanvasRow>
              <NotesBar>
                <Icon w={22} h={20}><path d="M1 2H21M1 9H21M1 16H10M17 13V19M14 16H20" /></Icon>
                <NotesInput placeholder="单击此处添加备注" aria-label="单击此处添加备注" />
              </NotesBar>
            </Stage>
            <Tools />
          </Workspace>
          <Status />
        </Window>
        <Meter><Levels /></Meter>
        <Meter $outer><Levels /></Meter>
        <Watermark>
          <MarkTop>
            <MarkBai>Bai</MarkBai>
            <MarkPaw>
              <svg width="106" height="114" viewBox="0 0 106 114" fill="#fdfefe" aria-hidden="true">
                <ellipse cx="14" cy="44" rx="13" ry="17" transform="rotate(-8 14 44)" />
                <ellipse cx="39" cy="19" rx="13" ry="18" />
                <ellipse cx="70" cy="21" rx="13" ry="17" transform="rotate(12 70 21)" />
                <ellipse cx="90" cy="52" rx="14" ry="17" />
                <path d="M51 45C61 45 67 54 74 63C82 73 96 80 96 93C96 106 87 113 76 112C67 111 60 109 51 109C42 109 36 111 28 112C16 113 7 106 7 93C7 82 19 76 28 65C35 56 41 45 51 45Z" />
              </svg>
              <MarkDu>du</MarkDu>
            </MarkPaw>
            <MarkCn>经验</MarkCn>
          </MarkTop>
          <MarkUrl>jingyan.baidu.com</MarkUrl>
        </Watermark>
      </Page>
    </>
  );
}
